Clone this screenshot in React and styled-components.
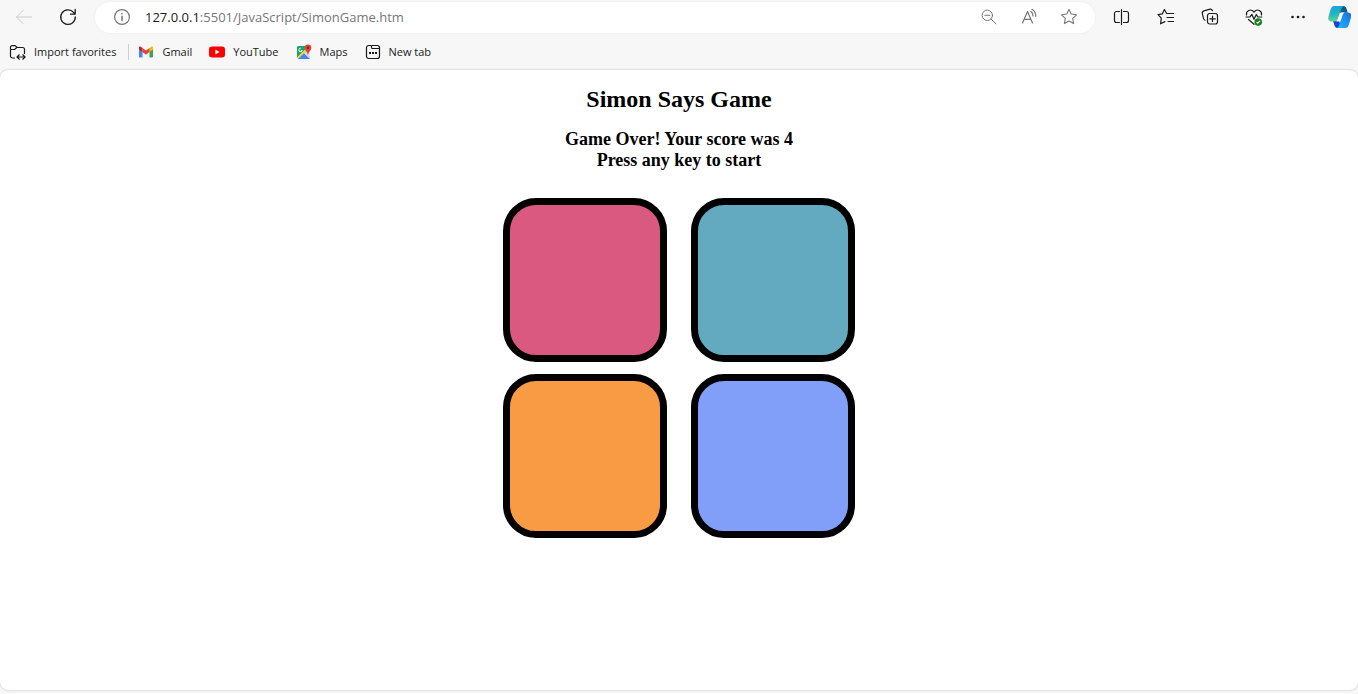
import React from "react";
import styled, { createGlobalStyle } from "styled-components";

const GlobalStyle = createGlobalStyle`
  *, *::before, *::after { box-sizing: border-box; }
  body { margin: 0; background: #f7f7f7; }
`;

const Browser = styled.div`
  display: flex;
  flex-direction: column;
  min-height: 100vh;
  padding-bottom: 4px;
  background: #f7f7f7;
  color: #1b1b1b;
  font-family: "Segoe UI", "Open Sans", "Noto Sans", sans-serif;
`;

const Toolbar = styled.header`
  display: flex;
  align-items: center;
  height: 34px;
  padding-left: 2px;
`;

const IconButton = styled.button`
  display: flex;
  align-items: center;
  justify-content: center;
  flex: none;
  width: ${(p) => p.$width || 44}px;
  height: 30px;
  padding: 0;
  border: 0;
  background: none;
  color: ${(p) => p.$color || "#1b1b1b"};
  svg { display: block; }
`;

const AddressBar = styled.form`
  display: flex;
  align-items: center;
  flex: 1;
  min-width: 0;
  height: 31px;
  margin: 0 5px;
  padding: 0 6px 0 7px;
  border-radius: 16px;
  background: #fff;
  box-shadow: 0 0 3px rgba(0, 0, 0, 0.06);
`;

const Address = styled.label`
  position: relative;
  display: flex;
  align-items: center;
  flex: 1;
  min-width: 0;
  height: 30px;
  padding-left: 3px;
  font-size: 13px;
  line-height: 20px;
  color: #767676;
  white-space: nowrap;
`;

const Host = styled.span`
  color: #1b1b1b;
`;

const AddressInput = styled.input`
  position: absolute;
  inset: 0;
  width: 100%;
  border: 0;
  background: transparent;
  outline: none;
`;

const Favorites = styled.nav`
  display: flex;
  align-items: center;
  height: 36px;
  padding-left: 9px;
`;

const Favorite = styled.a`
  display: flex;
  align-items: center;
  gap: 8px;
  margin-right: ${(p) => p.$after || 17}px;
  color: #1b1b1b;
  font-size: 11px;
  line-height: 16px;
  text-decoration: none;
  white-space: nowrap;
  svg { display: block; flex: none; }
`;

const Divider = styled.span`
  width: 1px;
  height: 16px;
  margin-right: 9px;
  background: #d0d0d0;
`;

const Page = styled.main`
  flex: 1;
  display: flex;
  flex-direction: column;
  align-items: center;
  padding: 16px 0;
  border-radius: 8px;
  background: #fff;
  box-shadow: 0 0 2px rgba(0, 0, 0, 0.3);
  color: #000;
  font-family: "Times New Roman", "Liberation Serif", serif;
  text-align: center;
`;

const Title = styled.h1`
  margin: 0 0 16px;
  font-size: 24px;
  line-height: 27px;
`;

const Status = styled.h2`
  margin: 0 0 27px;
  font-size: 18px;
  line-height: 21px;
`;

const Board = styled.div`
  display: grid;
  grid-template-columns: repeat(2, 164px);
  gap: 12px 24px;
`;

const Pad = styled.button`
  height: 164px;
  padding: 0;
  border: 7px solid #000;
  border-radius: 33px;
  background: ${(p) => p.$color};
`;

const Line = ({ size = 18, width = 1, children }) => (
  <svg width={size} height={size} viewBox={`0 0 ${size} ${size}`} fill="none" stroke="currentColor"
    strokeWidth={width} strokeLinecap="round" strokeLinejoin="round" aria-hidden="true">
    {children}
  </svg>
);

const BackIcon = () => (
  <Line><path d="M16.5 9H1.5M8 2.5 1.5 9 8 15.5" /></Line>
);

const RefreshIcon = () => (
  <Line width={1.3}><path d="M16.3 9A7.3 7.3 0 1 1 14.6 4.4L16 6M16.2 1.5V6.2H11.5" /></Line>
);

const InfoIcon = () => (
  <Line width={1.2}><circle cx="9" cy="9" r="7.4" /><path d="M9 8.3v4.2M9 5.5v.2" strokeWidth="1.5" /></Line>
);

const ZoomOutIcon = () => (
  <Line><circle cx="7.3" cy="7.3" r="5.2" /><path d="M11.2 11.2 16 16M4.8 7.3h5" /></Line>
);

const ReadAloudIcon = () => (
  <Line width={1.2}><path d="M2.5 15 7.5 3.500l5 11.500M4.300 11.300h6.400M11 3.500q2.200 1.600 2 4.500M12 1.300q4 2.500 3.800 7" /></Line>
);

const StarIcon = () => (
  <Line width={1.1}><path d="M9 1.4 11.3 6l5.2.8-3.8 3.6.9 5.2L9 13.1l-4.6 2.5.9-5.2L1.5 6.8 6.7 6Z" /></Line>
);

const SplitIcon = () => (
  <Line width={1.2}><path d="M6.500 3.500H3.500a2 2 0 0 0-2 2v7a2 2 0 0 0 2 2H6.500M10.500 3.500h3a2 2 0 0 1 2 2v7a2 2 0 0 1-2 2H10.500M8.500 1.500v15" /></Line>
);

const FavoritesIcon = () => (
  <Line width={1.2}><path d="M11.3 5.5 9.5 5.3 7.4 1.5 5.3 5.9 1 6.7l3.3 3.4-.7 5.7 4.3-2.2M11.3 5.5h5.2M10 9.5h6.5M11 13.5h5.5" /></Line>
);

const CollectionsIcon = () => (
  <Line width={1.2}><rect x="6.5" y="5.5" width="10" height="10.5" rx="2.2" /><path d="M11.5 8v5.5M8.8 10.8h5.5M4 12.2A2.3 2.3 0 0 1 2.5 10.5L1.3 5.3A2.2 2.2 0 0 1 2.9 2.8L9 1.2a2.2 2.2 0 0 1 2.4 1.5" /></Line>
);

const EssentialsIcon = () => (
  <Line width={1.2}>
    <path d="M1.5 7C.8 3 5.5-.1 9 4c3.500-4.100 8.200-1 7.500 3M1 9h4l1.800-2.700L9 11.300 11.300 6.500 12.800 9h4M3.500 11.500 9 16.300" />
    <circle cx="13.2" cy="14" r="3.8" fill="#15801b" stroke="none" />
    <path d="m11.900 14.500.8.600 2-2" stroke="#fff" />
  </Line>
);

const MoreIcon = () => (
  <Line><g fill="currentColor" stroke="none"><circle cx="3.500" cy="9" r="1.300" /><circle cx="9" cy="9" r="1.300" /><circle cx="14.500" cy="9" r="1.300" /></g></Line>
);

const CopilotIcon = () => (
  <svg width="24" height="24" viewBox="0 0 24 24" aria-hidden="true">
    <defs>
      <linearGradient id="leaf" x1="0" y1="0" x2="0" y2="1"><stop stopColor="#15a5d8" /><stop offset=".5" stopColor="#20b5c4" /><stop offset="1" stopColor="#61d391" /></linearGradient>
      <linearGradient id="wave" x1="1" y1="0" x2="0" y2="1"><stop stopColor="#2867d3" /><stop offset=".5" stopColor="#1994f4" /><stop offset="1" stopColor="#27b9f5" /></linearGradient>
    </defs>
    <path d="M12 1h4.500c1.700 0 2.600 1.300 3.200 3.300l1 3.500H12Z" fill="#0b5d85" />
    <path d="M6 16h6l3 7H10.500c-1.900 0-2.700-1.300-3.300-3.400Z" fill="#1545c9" />
    <path d="M7.500 1H17c-1.600.4-2.300 1.600-2.900 3.500L11 13.500c-.7 2.100-1.700 3-3.700 3H4.500c-2.800 0-3.700-2.200-3-5L3.700 4.300C4.300 2.200 5.500 1 7.500 1Z" fill="url(#leaf)" />
    <path d="M18.500 23H9.500c1.600-.4 2.300-1.600 2.900-3.500L15 10.500c.7-2.100 1.700-3 3.700-3h2.300c2.800 0 3.700 2.200 3 5l-2.200 7.200c-.6 2.100-1.800 3.300-3.300 3.300Z" fill="url(#wave)" />
    <path d="M12.700 9.500c.5-1.500 1.200-2 2.800-2h2.300c-1.400.4-1.900 1.300-2.300 2.500l-1.500 4.600c-.5 1.400-1.300 1.900-2.800 1.900H8.700c1.200-.4 1.700-1.100 2.100-2.300Z" fill="#fff" />
  </svg>
);

const ImportIcon = () => (
  <Line size={17} width={1.2}><path d="M5.500 14H3.500a2 2 0 0 1-2-2V3.200a1.600 1.600 0 0 1 1.600-1.600h3l2 1.900h5.400a2 2 0 0 1 2 2v4M1.500 5.500h4l2.300-2M8.500 13h7.500M10.300 10.800 8 13l2.300 2.200M13.800 10.800l2.300 2.200-2.300 2.200" /></Line>
);

const GmailIcon = () => (
  <svg width="16" height="16" viewBox="0 0 16 16" aria-hidden="true">
    <path d="M1 4.500 4.500 7v6.500H2a1 1 0 0 1-1-1Z" fill="#4285f4" />
    <path d="M15 4.500 11.500 7v6.500H14a1 1 0 0 0 1-1Z" fill="#34a853" />
    <path d="M11.500 4 13 2.900c1-.7 2 0 2 1v1.500l-3.500 2.700Z" fill="#fbbc04" />
    <path d="M4.500 4 3 2.900c-1-.7-2 0-2 1v1.500l3.500 2.700Z" fill="#c5221f" />
    <path d="M4.500 4 8 6.600 11.500 4v4.100L8 10.700 4.500 8.100Z" fill="#ea4335" />
  </svg>
);

const YouTubeIcon = () => (
  <svg width="16" height="16" viewBox="0 0 16 16" aria-hidden="true">
    <rect y="2.500" width="16" height="11" rx="3" fill="#f00" />
    <path d="M6.400 5.600 10.500 8l-4.100 2.400Z" fill="#fff" />
  </svg>
);

const MapsIcon = () => (
  <svg width="16" height="16" viewBox="0 0 16 16" aria-hidden="true">
    <rect x="1" y="2" width="13" height="13" rx="1.500" fill="#e4e7e8" />
    <path d="M2.500 2H9.500L9 7 1 14V3.500A1.500 1.500 0 0 1 2.500 2Z" fill="#1da462" />
    <path d="M1 13.500 9.500 5l1.500 2-8.500 8Z" fill="#ffd04b" />
    <path d="M2 15 8 9.300l6 5.700Z" fill="#4285f4" />
    <path d="m9 10 2-2 3 5v1.500Z" fill="#d2d5d7" />
    <path d="M4.700 4.200a1.800 1.800 0 1 0 1.600 2.500H4.800" fill="none" stroke="#fff" strokeWidth="1" />
    <path d="M12 .5a3.300 3.300 0 0 1 3.300 3.300c0 2.700-2.500 3.500-3.300 7.200-.8-3.700-3.300-4.500-3.300-7.200A3.300 3.300 0 0 1 12 .5Z" fill="#e04336" />
    <circle cx="12" cy="3.800" r="1.200" fill="#7e2720" />
  </svg>
);

const NewTabIcon = () => (
  <Line size={16} width={1.2}>
    <rect x="1.500" y="1.500" width="13" height="13" rx="2.200" /><path d="M6.500 1.500v2q0 1 1 1h7" />
    <path d="M4 8h2v2H4zM7 8h2v2H7zM10 8h2v2h-2z" fill="currentColor" stroke="none" />
  </Line>
);

const pads = [
  ["Pink", "#d95980"],
  ["Teal", "#63aac0"],
  ["Orange", "#f99b45"],
  ["Blue", "#819ff9"],
];

export default function App() {
  return (
    <Browser>
      <GlobalStyle />
      <Toolbar>
        <IconButton aria-label="Back" $color="#cccccc"><BackIcon /></IconButton>
        <IconButton aria-label="Refresh"><RefreshIcon /></IconButton>
        <AddressBar onSubmit={(e) => e.preventDefault()}>
          <IconButton type="button" aria-label="Site information" $width={40} $color="#767676"><InfoIcon /></IconButton>
          <Address>
            <Host>127.0.0.1</Host>:5501/JavaScript/SimonGame.htm
            <AddressInput aria-label="Address" />
          </Address>
          <IconButton type="button" aria-label="Zoom out" $width={40} $color="#767676"><ZoomOutIcon /></IconButton>
          <IconButton type="button" aria-label="Read aloud" $width={40} $color="#767676"><ReadAloudIcon /></IconButton>
          <IconButton type="button" aria-label="Add to favorites" $width={40} $color="#767676"><StarIcon /></IconButton>
        </AddressBar>
        <IconButton aria-label="Split screen"><SplitIcon /></IconButton>
        <IconButton aria-label="Favorites"><FavoritesIcon /></IconButton>
        <IconButton aria-label="Collections"><CollectionsIcon /></IconButton>
        <IconButton aria-label="Browser essentials"><EssentialsIcon /></IconButton>
        <IconButton aria-label="Settings and more"><MoreIcon /></IconButton>
        <IconButton aria-label="Copilot" $width={38}><CopilotIcon /></IconButton>
      </Toolbar>
      <Favorites aria-label="Favorites">
        <Favorite href="#import" $after={12}><ImportIcon />Import favorites</Favorite>
        <Divider />
        <Favorite href="#gmail"><GmailIcon />Gmail</Favorite>
        <Favorite href="#youtube"><YouTubeIcon />YouTube</Favorite>
        <Favorite href="#maps"><MapsIcon />Maps</Favorite>
        <Favorite href="#newtab"><NewTabIcon />New tab</Favorite>
      </Favorites>
      <Page>
        <Title>Simon Says Game</Title>
        <Status>Game Over! Your score was 4<br />Press any key to start</Status>
        <Board>
          {pads.map(([name, color]) => (
            <Pad key={name} type="button" aria-label={name} $color={color} />
          ))}
        </Board>
      </Page>
    </Browser>
  );
}
